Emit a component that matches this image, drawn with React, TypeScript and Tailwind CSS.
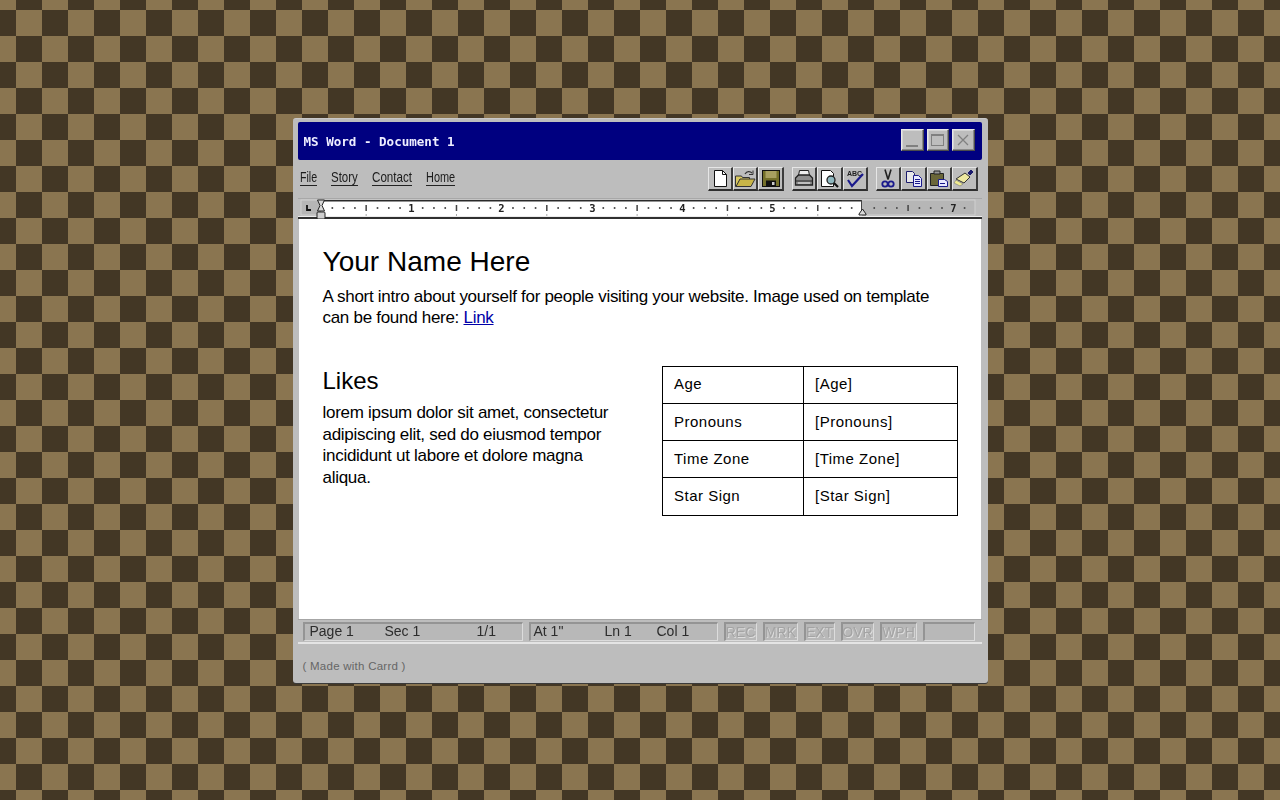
import type { ReactNode } from "react"

const chrome = "[font-family:'DejaVu_Sans_Mono',monospace]"

const menuItems = [
  { label: "File", w: "w-[17px]", inner: "scale-x-[0.76]" },
  { label: "Story", w: "w-[27px]", inner: "scale-x-[0.82]" },
  { label: "Contact", w: "w-[40px]", inner: "scale-x-[0.83]" },
  { label: "Home", w: "w-[29px]", inner: "scale-x-[0.78]" },
]

const details = [
  ["Age", "[Age]"],
  ["Pronouns", "[Pronouns]"],
  ["Time Zone", "[Time Zone]"],
  ["Star Sign", "[Star Sign]"],
]

function WinButton({ children }: { children: ReactNode }) {
  return (
    <div className="flex h-[22px] w-[22.5px] items-center justify-center border border-t-[#e8e8e8] border-l-[#e8e8e8] border-r-[#4c4c4c] border-b-[#4c4c4c] bg-[#bdbdbd] shadow-[inset_-1px_-1px_0_#8a8a8a,inset_1px_1px_0_#d4d4d4]">
      {children}
    </div>
  )
}

function ToolButton({ children }: { children: ReactNode }) {
  return (
    <div className="flex h-[24px] w-[25.4px] items-center justify-center border-b-2 border-r-2 border-b-[#2e2e2e] border-r-[#3c3c3c] border-t border-l border-t-[#e6e6e6] border-l-[#e6e6e6] bg-[#bdbdbd]">
      <svg width="22" height="21" viewBox="0 0 22 21" className="blur-[0.35px]">
        {children}
      </svg>
    </div>
  )
}

function Ruler() {
  const ticks = Array.from({ length: 58 }, (_, i) => i)
  const numbers = [
    [1, 411.5],
    [2, 501.5],
    [3, 592.5],
    [4, 682.5],
    [5, 772.5],
    [7, 953.5],
  ]
  return (
    <svg width="684" height="21" viewBox="298 198 684 21" className="block blur-[0.4px]">
      <rect x="298" y="198" width="684" height="21" fill="#bdbdbd" />
      <rect x="298" y="198" width="684" height="1" fill="#a8a8a8" />
      <rect x="301" y="200" width="674" height="15" fill="#b6b6b6" stroke="#d0d0d0" />
      <rect x="321" y="201" width="541" height="15" fill="#ffffff" />
      <rect x="321" y="200" width="541" height="1.5" fill="#2a2a2a" />
      <rect x="861" y="200" width="1" height="15" fill="#444" />
      <rect x="298" y="217" width="684" height="2" fill="#303030" />
      <rect x="298" y="216" width="684" height="1" fill="#ececec" />
      <path d="M307 205v5h4" fill="none" stroke="#111" strokeWidth="1.8" />
      {ticks.map((i) => {
        const x = 321 + i * 11.29
        if (i === 0 || x > 972 || i % 8 === 0) return null
        if (i % 4 === 0)
          return (
            <g key={i}>
              <rect x={x - 0.75} y="205" width="1.5" height="6" fill="#444" />
              {x < 862 && <rect x={x - 0.5} y="214" width="1" height="2" fill="#aaa" />}
            </g>
          )
        return <rect key={i} x={x - 0.75} y="207" width="1.6" height="2" fill="#555" />
      })}
      {numbers.map(([n, x]) => (
        <text key={n} x={x} y="212" textAnchor="middle" fontSize="10.5" fontWeight="700" fontFamily="'DejaVu Sans Mono', monospace" fill="#222">
          {n}
        </text>
      ))}
      <path d="M317.5 200h7l-2.5 5.5 2.5 5.5h-7l2.5-5.5z" fill="#d8d8d8" stroke="#222" strokeWidth="1" />
      <rect x="317" y="212" width="8" height="7" rx="1" fill="#cfcfcf" stroke="#222" />
      <path d="M859 214l3.5-5 3.5 5v1h-7z" fill="#d8d8d8" stroke="#222" />
    </svg>
  )
}

function StatusPane({ className, children }: { className: string; children?: ReactNode }) {
  return (
    <div className={`relative flex h-[19px] items-center border-t-2 border-l-2 border-t-[#949494] border-l-[#949494] border-b border-r border-b-[#dcdcdc] border-r-[#dcdcdc] bg-[#b8b8b8] ${className}`}>
      {children}
    </div>
  )
}

function Indicator({ label, width }: { label: string; width: string }) {
  return (
    <StatusPane className={`${width} justify-center`}>
      <span className="text-[14px] leading-none text-[#a4a4a4] [text-shadow:1px_1px_0_#dedede]">{label}</span>
    </StatusPane>
  )
}

export default function App() {
  return (
    <div className="flex min-h-screen items-center justify-center bg-[conic-gradient(#433725_25%,#8a7550_0_50%,#433725_0_75%,#8a7550_0)] bg-[length:52px_52px] bg-[position:-10px_-16px] [font-family:'Liberation_Sans',Arial,sans-serif]">
      <div className="flex h-[565px] w-[695px] flex-col rounded-[3px] border-t border-[#c9c9c9] bg-[#bdbdbd] pl-[5px] pr-[6px] pt-[3px] shadow-[0_1px_0_#3a3a3a]">
        {/* title bar */}
        <div className="flex h-[38px] items-center justify-between rounded-[2px] bg-[#000080] pl-[6px] pr-[7px]">
          <span className={`${chrome} pt-[3px] blur-[0.35px] text-[12.55px] font-bold text-[#eeeeff]`}>MS Word - Document 1</span>
          <div className="mb-[1px] flex gap-[3px]">
            <WinButton>
              <div className="mt-[12px] h-[2px] w-[12px] bg-[#808080]" />
            </WinButton>
            <WinButton>
              <div className="h-[12px] w-[13px] border border-t-2 border-[#808080]" />
            </WinButton>
            <WinButton>
              <svg width="12" height="12" viewBox="0 0 12 12">
                <path d="M1 1l10 10M11 1L1 11" stroke="#808080" strokeWidth="1.3" />
              </svg>
            </WinButton>
          </div>
        </div>

        {/* menu and toolbar */}
        <div className="flex h-[38px] items-center justify-between pl-[2px] pr-[4px]">
          <nav className="flex gap-[14px] pb-[2px]">
            {menuItems.map((item) => (
              <span key={item.label} className={`${item.w} block h-[16px] border-b border-[#222] text-[14px] leading-[15px] text-[#1c1c1c] blur-[0.25px] whitespace-nowrap`}>
                <span className={`${item.inner} inline-block origin-left`}>{item.label}</span>
              </span>
            ))}
          </nav>
          <div className="mt-[1px] flex gap-2">
            <div className="flex">
              <ToolButton>
                <path d="M5.5 2.5h8l4 4v12h-12z" fill="#fff" stroke="#111" />
                <path d="M13.5 2.5v4h4" fill="none" stroke="#111" />
              </ToolButton>
              <ToolButton>
                <path d="M1.5 8h6l1 1.5h7v2H6l-3 7H1.5z" fill="#d8c860" stroke="#333" />
                <path d="M2 18.5l4-7.5h15l-4 7.5z" fill="#c8b548" stroke="#333" />
                <path d="M11 6c2-3 5-3 7-1" fill="none" stroke="#333" strokeWidth="1.3" />
                <path d="M19 2.5v4h-4" fill="none" stroke="#333" />
              </ToolButton>
              <ToolButton>
                <rect x="2.5" y="2.5" width="17" height="16" fill="#74702a" stroke="#111" />
                <rect x="5.5" y="3" width="11" height="7" fill="#a8a060" />
                <rect x="6" y="12.5" width="10" height="6" fill="#111" />
                <rect x="12" y="14" width="2.5" height="3" fill="#ccc" />
              </ToolButton>
            </div>
            <div className="flex">
              <ToolButton>
                <path d="M6.5 2.5h9l1 5h-11z" fill="#eee" stroke="#222" />
                <path d="M2.5 10l3-3h11l3 3v7h-17z" fill="#8e8e8e" stroke="#222" strokeWidth="1.3" />
                <path d="M2.5 13h17" stroke="#222" />
                <path d="M5 15h12" stroke="#eee" />
              </ToolButton>
              <ToolButton>
                <path d="M3.5 2.5h9l3 3v13h-12z" fill="#fff" stroke="#111" />
                <circle cx="13" cy="12" r="4" fill="#8fb8c0" stroke="#222" strokeWidth="1.3" />
                <path d="M16 15l4 4" stroke="#111" strokeWidth="2.2" />
              </ToolButton>
              <ToolButton>
                <text x="3" y="8" fontSize="7" fontWeight="700" fontFamily="'Liberation Sans', sans-serif" fill="#222">ABC</text>
                <path d="M4 12l4 6L19 6" fill="none" stroke="#1a1a8c" strokeWidth="2.2" />
              </ToolButton>
            </div>
            <div className="flex">
              <ToolButton>
                <path d="M8 1.5l3 10M14 1.5l-3 10" stroke="#222" strokeWidth="1.6" />
                <circle cx="8" cy="16" r="2.7" fill="none" stroke="#1a1a8c" strokeWidth="1.8" />
                <circle cx="14" cy="16" r="2.7" fill="none" stroke="#1a1a8c" strokeWidth="1.8" />
              </ToolButton>
              <ToolButton>
                <path d="M3.5 3.5h6l2 2v9h-8z" fill="#e8e8e8" stroke="#1a1a6c" />
                <path d="M10.5 7.5h5l3 3v8h-8z" fill="#e8e8ff" stroke="#1a1a8c" />
                <path d="M12 11.5h5M12 13.5h5M12 15.5h5" stroke="#1a1a8c" />
              </ToolButton>
              <ToolButton>
                <path d="M2.5 5.5h13v12h-13z" fill="#6a6638" stroke="#222" />
                <path d="M6 3h6v3H6z" fill="#999" stroke="#222" />
                <path d="M10.5 11.5h6l3 2v5h-9z" fill="#e8e8ff" stroke="#1a1a8c" />
                <path d="M12 15.5h5" stroke="#1a1a8c" />
              </ToolButton>
              <ToolButton>
                <path d="M15 5l3-3 2 2-3 3z" fill="#1a1a6c" stroke="#1a1a6c" />
                <path d="M12 5l5 4-6 6-8-4z" fill="#eee9a0" stroke="#333" />
                <path d="M3 12l7 4-3 2-6-3z" fill="#f0ec90" stroke="#777" strokeWidth="0.6" />
              </ToolButton>
            </div>
          </div>
        </div>

        {/* ruler */}
        <Ruler />

        {/* page */}
        <main className="mx-px h-[400px] bg-white pl-6 pr-[23px] pt-[27px] text-black">
          <h1 className="text-[28px] leading-[32px] tracking-[0.02px]">Your Name Here</h1>
          <p className="mt-[8px] text-[17px] leading-[21.5px] tracking-[-0.29px]">
            A short intro about yourself for people visiting your website. Image used on template can be found here:{" "}
            <a href="#" className="text-[#0000a8] underline">Link</a>
          </p>
          <div className="mt-[37px] flex justify-between">
            <section className="w-[300px]">
              <h2 className="mt-[1px] text-[24px] leading-[28px]">Likes</h2>
              <p className="mt-[7.5px] text-[17px] leading-[21.5px] tracking-[-0.28px]">
                lorem ipsum dolor sit amet, consectetur adipiscing elit, sed do eiusmod tempor incididunt ut labore et dolore magna aliqua.
              </p>
            </section>
            <table className="h-[150px] w-[296px] table-fixed border-collapse text-[15px] tracking-[0.5px]">
              <tbody>
                {details.map(([k, v]) => (
                  <tr key={k}>
                    <td className="w-[141px] border border-black pl-[11.5px] py-0">{k}</td>
                    <td className="border border-black pl-[11.5px] py-0">{v}</td>
                  </tr>
                ))}
              </tbody>
            </table>
          </div>
        </main>

        {/* status bar */}
        <div className="flex h-[25px] items-start gap-[6px] border-t border-[#a6a6a6] border-b-2 border-b-[#e4e4e4] pl-[5px] pt-[2px] blur-[0.3px]">
          <StatusPane className="w-[220px] text-[14px] text-[#2c2c2c]">
            <span className="absolute left-[5px]">Page 1</span>
            <span className="absolute left-[80px]">Sec 1</span>
            <span className="absolute left-[172px]">1/1</span>
          </StatusPane>
          <StatusPane className="w-[189px] text-[14px] text-[#2c2c2c]">
            <span className="absolute left-[3px]">At 1"</span>
            <span className="absolute left-[74px]">Ln 1</span>
            <span className="absolute left-[126px]">Col 1</span>
          </StatusPane>
          <div className="flex gap-[6px]">
            <Indicator label="REC" width="w-[33px]" />
            <Indicator label="MRK" width="w-[35px]" />
            <Indicator label="EXT" width="w-[31px]" />
            <Indicator label="OVR" width="w-[33px]" />
            <Indicator label="WPH" width="w-[37px]" />
            <StatusPane className="w-[52px]" />
          </div>
        </div>

        {/* footer */}
        <div className="flex flex-1 items-center pl-[5px] pt-[7px] text-[11.5px] tracking-[0.25px] text-[#666]">( Made with Carrd )</div>
      </div>
    </div>
  )
}
